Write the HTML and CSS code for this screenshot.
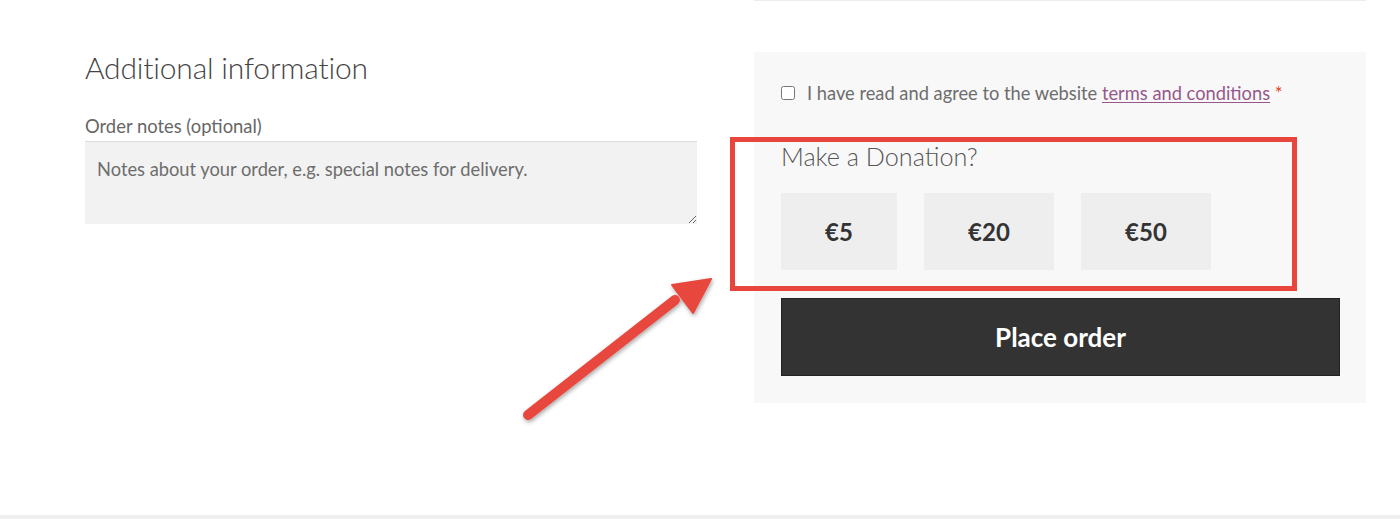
FILE: index.html
```html
<!DOCTYPE html>
<html lang="en">
<head>
<meta charset="utf-8">
<title>Checkout</title>
<link rel="stylesheet" href="styles.css">
</head>
<body>
<div class="page">
  <div class="columns">
    <section class="additional">
      <h3 class="heading">Additional information</h3>
      <label class="label" for="notes">Order notes (optional)</label>
      <div class="textarea-wrap">
        <textarea id="notes" class="notes" placeholder="Notes about your order, e.g. special notes for delivery."></textarea>
      </div>
    </section>
    <section class="review">
      <div class="top-rule"></div>
      <div class="payment">
        <label class="terms">
          <input type="checkbox" class="check">
          <span>I have read and agree to the website <a href="#" class="link">terms and conditions</a> <span class="req">*</span></span>
        </label>
        <div class="donation">
          <h4 class="donation-title">Make a Donation?</h4>
          <div class="amounts">
            <button class="amount amount-sm">€5</button>
            <button class="amount">€20</button>
            <button class="amount">€50</button>
          </div>
          <div class="highlight"></div>
        </div>
        <button class="place-order">Place order</button>
      </div>
    </section>
  </div>
  <svg class="arrow" width="220" height="170" viewBox="0 0 220 170">
    <defs>
      <filter id="sh" x="-20%" y="-20%" width="140%" height="140%">
        <feDropShadow dx="1" dy="2" stdDeviation="2" flood-color="#000" flood-opacity="0.35"/>
      </filter>
    </defs>
    <g filter="url(#sh)" fill="#e8473e" stroke="#e8473e">
      <line x1="28" y1="155" x2="175" y2="40" stroke-width="10" stroke-linecap="round"/>
      <polygon points="211,19 172,25 193,53" stroke-width="2" stroke-linejoin="round"/>
    </g>
  </svg>
  <div class="footer-rule"></div>
</div>
</body>
</html>
```

FILE: styles.css
```css
html, body {
  margin: 0;
  padding: 0;
  background: #fff;
}
body {
  font-family: "Lato", "Liberation Sans", sans-serif;
  color: #6d6d6d;
}
.page {
  position: relative;
  width: 1400px;
  height: 519px;
  overflow: hidden;
}
.columns {
  display: flex;
  gap: 57px;
  padding-left: 85px;
}
.additional {
  width: 612px;
  padding-top: 49px;
}
.heading {
  margin: 0;
  font-weight: 300;
  font-size: 30px;
  line-height: 36px;
  color: #444;
  letter-spacing: -0.2px;
}
.label {
  display: block;
  margin-top: 29px;
  font-size: 18.4px;
  line-height: 24px;
  color: #666;
}
.textarea-wrap {
  margin-top: 3px;
}
.notes {
  display: block;
  box-sizing: border-box;
  width: 612px;
  height: 83px;
  border: 0;
  border-top: 1px solid #dcdcdc;
  background: #f2f2f2;
  padding: 15px 12px;
  font-family: inherit;
  font-size: 18.3px;
  line-height: 24px;
  color: #555;
  resize: vertical;
  margin: 0;
}
.notes::placeholder {
  color: #6d6d6d;
}
.review {
  width: 612px;
}
.top-rule {
  height: 1px;
  background: #ececec;
}
.payment {
  position: relative;
  margin-top: 51px;
  background: #f8f8f8;
  padding: 31px 26px 27px 27px;
  height: 351px;
  box-sizing: border-box;
}
.terms {
  display: flex;
  align-items: center;
  gap: 12px;
  font-size: 18.3px;
  line-height: 24px;
  color: #6d6d6d;
  height: 20px;
}
.check {
  margin: 0;
  width: 14px;
  height: 14px;
}
.link {
  color: #96588a;
  text-decoration: underline;
  text-underline-offset: 2px;
}
.req {
  color: #e2401c;
}
.donation {
  position: relative;
  margin-top: 38px;
}
.donation-title {
  margin: 0;
  font-weight: 300;
  font-size: 25.2px;
  line-height: 30px;
  color: #555;
}
.amounts {
  display: flex;
  gap: 27px;
  margin-top: 22px;
}
.amount {
  width: 130px;
  height: 77px;
  border: 0;
  background: #eeeeee;
  font-family: inherit;
  font-weight: 700;
  font-size: 24px;
  color: #333;
  padding: 0;
}
.amount-sm {
  width: 116px;
}
.highlight {
  position: absolute;
  left: -51px;
  top: -4px;
  width: 567px;
  height: 154px;
  box-sizing: border-box;
  border: 5px solid #e8453c;
}
.place-order {
  display: block;
  margin-top: 28px;
  width: 559px;
  height: 78px;
  background: #333;
  border: 1px solid #222;
  color: #fff;
  font-family: inherit;
  font-weight: 700;
  font-size: 26px;
  padding: 0;
}
.arrow {
  position: absolute;
  left: 500px;
  top: 260px;
}
.footer-rule {
  position: absolute;
  left: 0;
  right: 0;
  bottom: 0;
  height: 4px;
  background: #efefef;
}
```
